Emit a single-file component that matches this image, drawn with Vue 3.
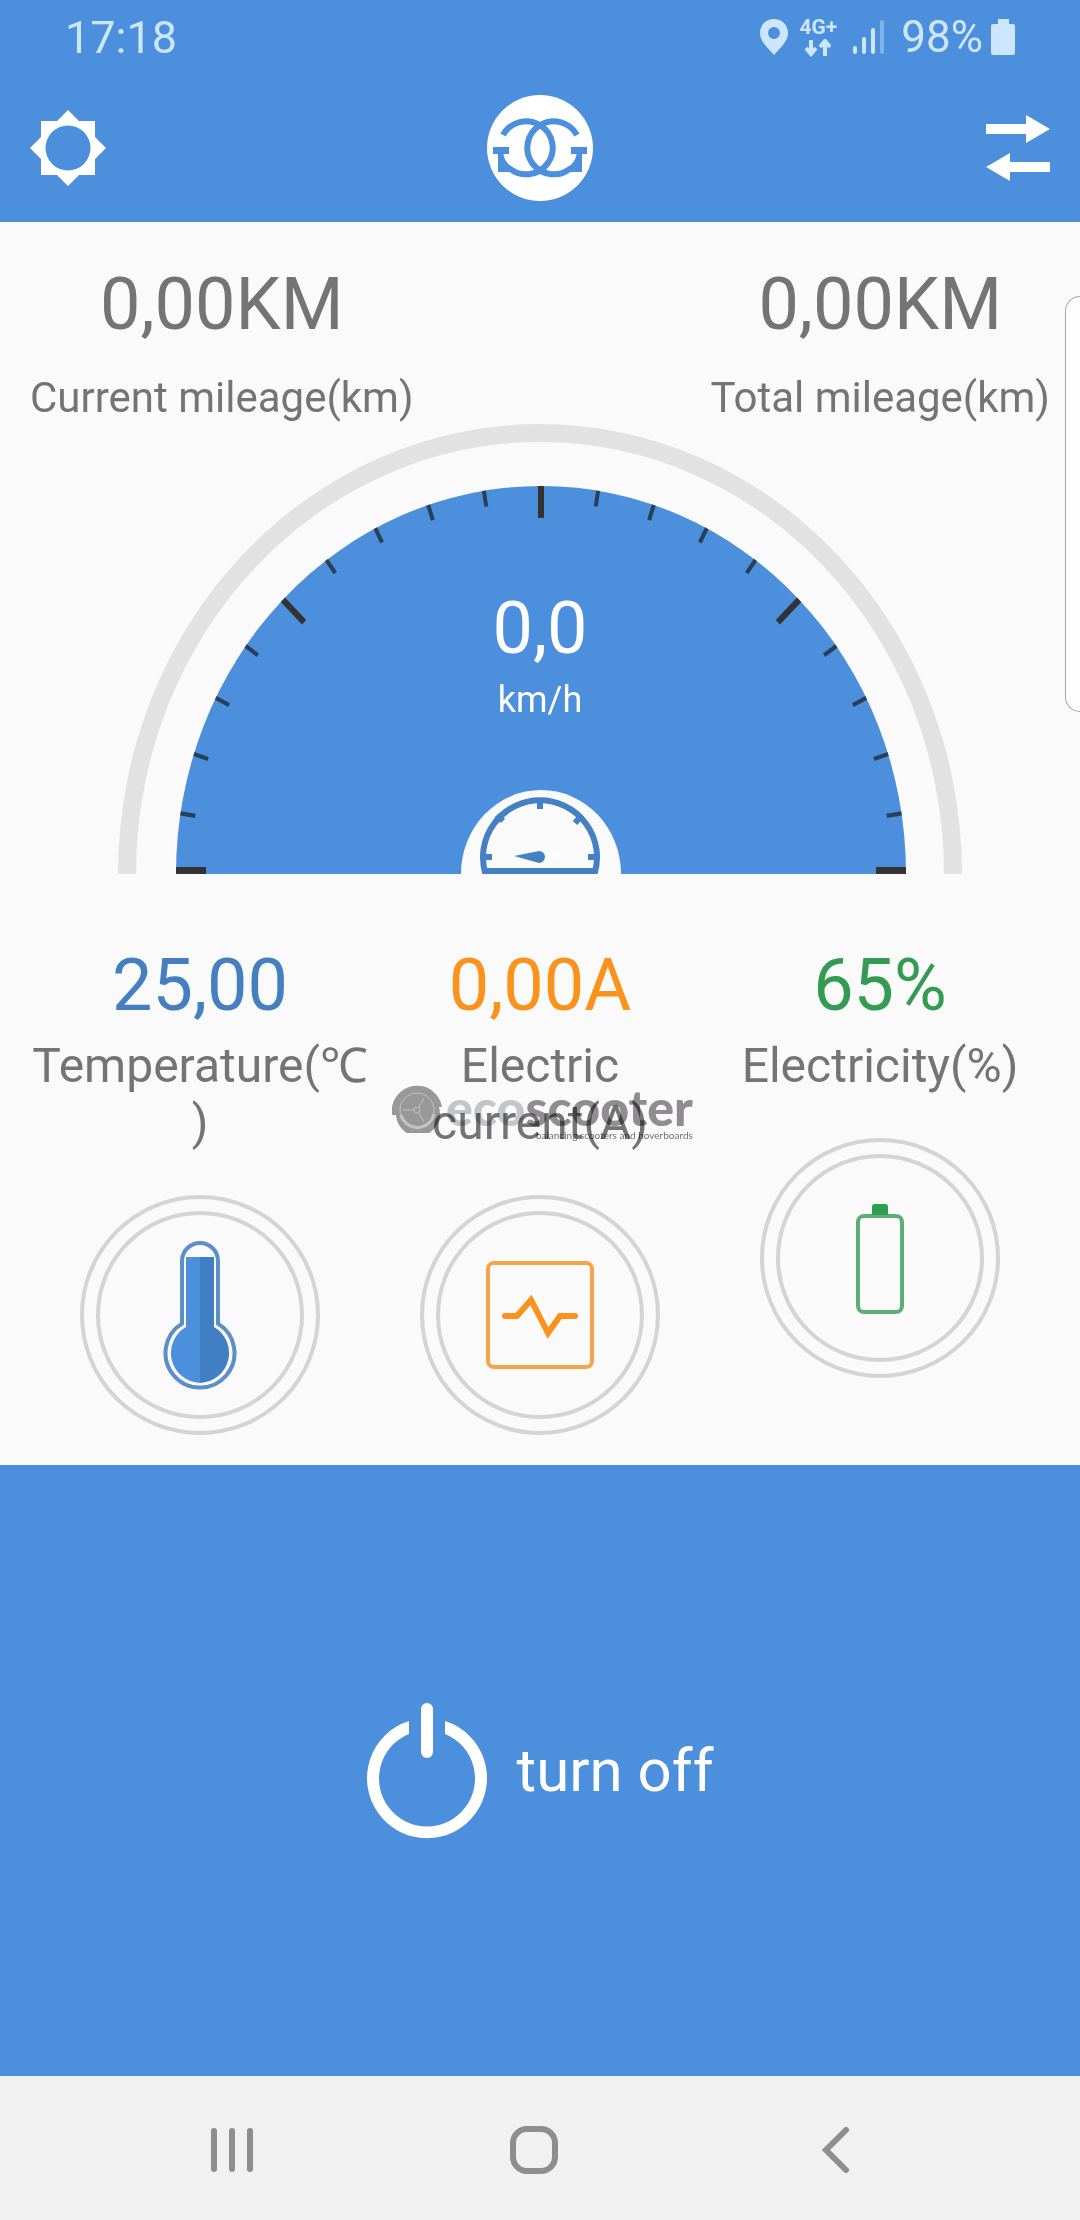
<script setup>
const rad = (deg) => (deg * Math.PI) / 180

// Dial marks run every 9 degrees, with a long one every 45.
const ticks = Array.from({ length: 21 }, (_, i) => i * 9)
  .filter((deg) => deg > 0 && deg < 180)
  .map((deg) => {
    const major = deg % 45 === 0
    const inner = major ? 335 : 350
    return {
      deg,
      major,
      x1: Math.cos(rad(deg)) * 365,
      y1: -Math.sin(rad(deg)) * 365,
      x2: Math.cos(rad(deg)) * inner,
      y2: -Math.sin(rad(deg)) * inner,
    }
  })

const mileage = [
  { value: '0,00KM', label: 'Current mileage(km)' },
  { value: '0,00KM', label: 'Total mileage(km)' },
]
</script>

<template>
  <div class="screen">
    <div class="status">
      <span class="clock">17:18</span>
      <div class="indicators">
        <svg width="28" height="36" viewBox="0 0 28 36">
          <path fill-rule="evenodd" d="M14 0C6 0 0 6 0 14c0 9 9 16 14 22 5-6 14-13 14-22C28 6 22 0 14 0zm0 8a6 6 0 1 1 0 12 6 6 0 0 1 0-12z" />
        </svg>
        <div class="network">
          <span>4G+</span>
          <svg width="26" height="18" viewBox="0 0 26 18">
            <path d="M6 1v12M1 9l5 6 5-6M20 17V4M15 8l5-6 5 6" fill="none" stroke="currentColor" stroke-width="4" />
          </svg>
        </div>
        <svg class="signal" width="32" height="36" viewBox="0 0 32 36">
          <rect x="0" y="27" width="4" height="8" rx="2" />
          <rect x="9" y="18" width="4" height="17" rx="2" />
          <rect x="18" y="9" width="4" height="26" rx="2" />
          <rect x="27" y="1" width="4" height="34" rx="2" opacity=".4" />
        </svg>
        <div class="charge">
          <span>98%</span>
          <svg width="24" height="36" viewBox="0 0 24 36">
            <path d="M7 0h11v5h4a2 2 0 0 1 2 2v27a2 2 0 0 1-2 2H2a2 2 0 0 1-2-2V7a2 2 0 0 1 2-2h5z" />
          </svg>
        </div>
      </div>
    </div>

    <header class="bar">
      <button type="button" aria-label="Settings">
        <svg width="76" height="76" viewBox="0 0 76 76">
          <path fill="#fff" fill-rule="evenodd" d="M38 0l11 11h16v16l11 11-11 11v16H49L38 76 27 65H11V49L0 38l11-11V11h16zM38 15.500a22.500 22.500 0 1 0 0 45 22.500 22.500 0 0 0 0-45z" />
        </svg>
      </button>
      <svg width="106" height="106" viewBox="-53 -53 106 106" role="img" aria-label="GG">
        <circle r="53" fill="#fff" />
        <g fill="none" stroke="#4b8fdd" stroke-width="6">
          <path d="M-37-13A26.500 26.500 0 1 1-31 20" />
          <path d="M37-13A26.500 26.500 0 1 0 31 20" />
        </g>
        <path fill="#4b8fdd" d="M-47-1h16v7h-5.500C-36 12-31 18-25 21l-3 3h-14V6h-5zM47-1H31v7h5.500C36 12 31 18 25 21l3 3h14V6h5z" />
      </svg>
      <button type="button" aria-label="Switch device">
        <svg width="64" height="66" viewBox="0 0 64 66">
          <path fill="#fff" d="M0 9h40V0l24 14-24 14v-9H0zM64 47H24v-9L0 52l24 14v-9h40z" />
        </svg>
      </button>
    </header>

    <main class="readings">
      <div class="edge"></div>
      <section class="mileage">
        <div v-for="item in mileage" :key="item.label">
          <p class="value">{{ item.value }}</p>
          <p class="caption">{{ item.label }}</p>
        </div>
      </section>

      <section class="dial">
        <svg viewBox="0 0 844 450">
          <path fill="#e2e2e2" d="M0 450A422 450 0 0 1 844 450H826A404 432 0 0 0 18 450z" />
          <path fill="#4b8fdd" d="M58 450A365 388 0 0 1 788 450z" />
          <g transform="translate(423 450) scale(1 1.063)">
            <line
              v-for="t in ticks"
              :key="t.deg"
              :x1="t.x1"
              :y1="t.y1"
              :x2="t.x2"
              :y2="t.y2"
              :class="t.major ? 'major' : 'minor'"
            />
          </g>
          <path fill="#333" d="M58 443h30v7H58zM758 443h30v7h-30z" />
          <path fill="#fafafa" d="M343 450A80 84 0 0 1 503 450z" />
          <g fill="none" stroke="#4480c4" stroke-width="6">
            <path d="M367.500 450A57 57 0 1 1 476.500 450" />
            <path d="M365 433h9M470 433h9M422 375v10M379 391l6 6M464 391l-7 8" />
          </g>
          <path fill="#4480c4" d="M365 444h114v6H365zM396 432l25-5a6 6 0 0 1 0 12z" />
          <path fill="#fff" d="M427 428l18 4-18 5z" />
        </svg>
        <div class="speed">
          <p class="value">0,0</p>
          <p class="unit">km/h</p>
        </div>
      </section>

      <section class="stats">
        <div class="stat">
          <p class="value blue">25,00</p>
          <p class="name">Temperature(℃<br />)</p>
          <svg viewBox="0 0 240 240">
            <circle cx="120" cy="120" r="118" />
            <circle cx="120" cy="120" r="102" />
            <path d="M102 128.600V66a18 18 0 0 1 36 0v62.600a34.500 34.500 0 1 1-36 0z" fill="#fafafa" stroke="#5b8fc9" stroke-width="4" />
            <path fill="#4b8fdd" d="M106 62h14v126a30 30 0 0 1-14-56z" />
            <path fill="#417fc4" d="M120 62h14v70a30 30 0 0 1-14 56z" />
          </svg>
        </div>
        <div class="stat">
          <p class="value orange">0,00A</p>
          <p class="name">Electric<br />current(A)</p>
          <div class="watermark">
            <svg viewBox="0 0 50 48">
              <path fill="#9b9b9b" d="M0 30A25 25 0 1 1 50 22H47A22 22.500 0 1 1 4 30z" />
              <g fill="none" stroke="#c6c7c9">
                <circle cx="25" cy="25" r="17" stroke-width="1" />
                <path d="M9 30A17 17 0 0 0 42 29" stroke-width="3" />
                <circle cx="25" cy="25" r="3" />
                <path d="M22 25H11M27 22l5-9M27 28l5 9" stroke-width="1" />
              </g>
            </svg>
            <div class="brand">
              <span class="name-mark"><span class="eco">eco</span>scooter</span>
              <span class="tagline">balancing scooters and hoverboards</span>
            </div>
          </div>
          <svg viewBox="0 0 240 240">
            <circle cx="120" cy="120" r="118" />
            <circle cx="120" cy="120" r="102" />
            <rect x="68" y="68" width="104" height="104" rx="6" fill="none" stroke="#f6a44a" stroke-width="4" />
            <path d="M85 121h12l14-16 17 33 12-17h15" fill="none" stroke="#fb921b" stroke-width="6" stroke-linecap="round" />
          </svg>
        </div>
        <div class="stat">
          <p class="value green">65%</p>
          <p class="name">Electricity(%)</p>
          <svg viewBox="0 0 240 240">
            <circle cx="120" cy="120" r="118" />
            <circle cx="120" cy="120" r="102" />
            <rect x="98" y="78" width="44" height="96" rx="6" fill="none" stroke="#5bae75" stroke-width="4" />
            <path fill="#2f9e50" d="M112 77V69q0-3 3-3h10q3 0 3 3v8z" />
          </svg>
        </div>
      </section>
    </main>

    <section class="control">
      <button type="button" class="power">
        <svg width="120" height="136" viewBox="0 0 120 136">
          <path fill="#fff" d="M42 18A60 60 0 1 0 78 18V31A48 48 0 1 1 42 31z" />
          <rect x="54" y="0" width="12" height="55" rx="6" fill="#fff" />
        </svg>
        <span>turn off</span>
      </button>
    </section>

    <nav class="keys">
      <button type="button" aria-label="Recent apps">
        <svg width="48" height="48" viewBox="0 0 48 48">
          <path d="M6 5v38M24 5v38M42 5v38" />
        </svg>
      </button>
      <button type="button" aria-label="Home">
        <svg width="48" height="48" viewBox="0 0 48 48">
          <rect x="3" y="3" width="42" height="42" rx="14" />
        </svg>
      </button>
      <button type="button" aria-label="Back">
        <svg width="48" height="48" viewBox="0 0 48 48">
          <path d="M34 4L14 24l20 20" />
        </svg>
      </button>
    </nav>
  </div>
</template>

<style>
body {
  margin: 0;
}
</style>

<style scoped>
.screen {
  display: flex;
  flex-direction: column;
  min-height: 100vh;
  background: #fafafa;
  color: #747474;
  font-family: Roboto, "Noto Sans", "Noto Sans CJK SC", sans-serif;
}

p {
  margin: 0;
}

svg {
  display: block;
}

button {
  padding: 0;
  border: 0;
  background: none;
  font: inherit;
  color: inherit;
  cursor: pointer;
}

.status {
  display: flex;
  align-items: center;
  justify-content: space-between;
  height: 74px;
  padding: 0 65px;
  background: #4b8fdd;
  color: #cde5fd;
  fill: #cde5fd;
  font-size: 45px;
}

.indicators {
  display: flex;
  align-items: center;
  gap: 12px;
}

.network {
  display: flex;
  flex-direction: column;
  align-items: center;
  gap: 2px;
  font-size: 21px;
  font-weight: 700;
  line-height: 20px;
}

.signal {
  margin: 0 4px;
}

.charge {
  display: flex;
  align-items: center;
  gap: 8px;
  font-size: 44px;
}

.bar {
  display: grid;
  grid-template-columns: 1fr auto 1fr;
  align-items: center;
  height: 148px;
  padding: 0 30px;
  background: #4b8fdd;
}

.bar button {
  justify-self: start;
}

.bar button:last-child {
  justify-self: end;
}

.readings {
  position: relative;
  padding: 41px 30px 30px;
}

.edge {
  position: absolute;
  top: 74px;
  right: 0;
  width: 14px;
  height: 414px;
  border: 1px solid #a4a4a4;
  border-right: 0;
  border-radius: 18px 0 0 18px;
  background: #fdfdfd;
}

.mileage {
  display: flex;
  justify-content: space-between;
  text-align: center;
}

.value {
  font-size: 72px;
  line-height: 84px;
}

.caption {
  margin-top: 26px;
  font-size: 42px;
  line-height: 49px;
}

.dial {
  position: relative;
  margin: 2px 88px 0;
}

.major {
  stroke: #333;
  stroke-width: 6;
}

.minor {
  stroke: #2a405a;
  stroke-width: 4;
}

.speed {
  position: absolute;
  inset: 0;
  padding-top: 163px;
  color: #fff;
  text-align: center;
}

.unit {
  margin-top: 8px;
  font-size: 36px;
  line-height: 42px;
}

.stats {
  display: grid;
  grid-template-columns: repeat(3, 1fr);
  margin-top: 70px;
  text-align: center;
}

.stat {
  position: relative;
}

.stat > svg {
  width: 240px;
  margin: 44px auto 0;
}

.stat > svg circle {
  fill: none;
  stroke: #d4d4d4;
  stroke-width: 4;
}

.name {
  margin-top: 9px;
  font-size: 48px;
  line-height: 57px;
}

.blue {
  color: #457fc0;
}

.orange {
  color: #fb921b;
}

.green {
  color: #339c52;
}

.watermark {
  position: absolute;
  top: 141px;
  left: 22px;
  display: flex;
  gap: 4px;
  mix-blend-mode: multiply;
}

.watermark > svg {
  width: 50px;
  height: 48px;
}

.brand {
  display: flex;
  flex-direction: column;
  align-items: flex-end;
}

.name-mark {
  color: #929093;
  font-family: Lato, sans-serif;
  font-size: 50px;
  font-weight: 900;
  line-height: 44px;
}

.eco {
  color: #c8c9cc;
}

.tagline {
  font-family: Lato, sans-serif;
  font-size: 10px;
  line-height: 12px;
}

.control {
  display: flex;
  flex: 1;
  align-items: center;
  justify-content: center;
  padding: 60px 0;
  background: #4b8fdd;
}

.power {
  display: flex;
  align-items: center;
  gap: 30px;
  color: #fff;
  font-size: 60px;
}

.keys {
  display: flex;
  box-sizing: border-box;
  height: 144px;
  padding: 4px 93px 0 81px;
  background: #f1f1f1;
}

.keys button {
  display: flex;
  flex: 1;
  align-items: center;
  justify-content: center;
}

.keys svg {
  fill: none;
  stroke: #8e8e8e;
  stroke-width: 6;
  stroke-linecap: round;
}
</style>
